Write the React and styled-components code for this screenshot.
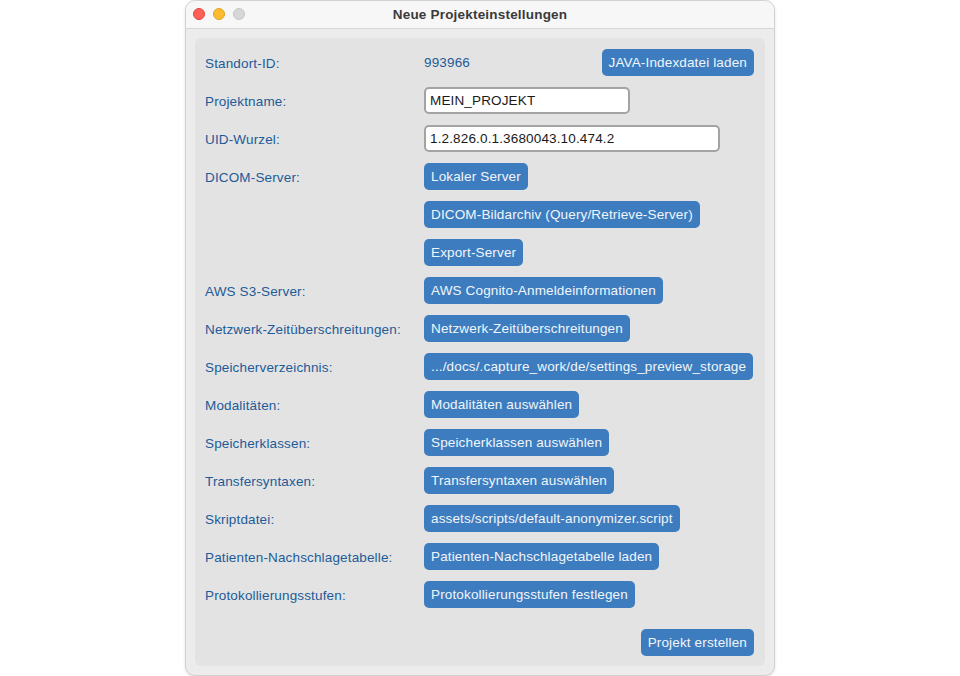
import React from "react";
import styled, { createGlobalStyle } from "styled-components";

const GlobalStyle = createGlobalStyle`
    html, body {
        margin: 0;
        padding: 0;
        background: #ffffff;
    }
    body {
        font-family: "Liberation Sans", Arial, sans-serif;
        -webkit-font-smoothing: antialiased;
    }
`;

const rows = [
    { label: "AWS S3-Server:", buttons: ["AWS Cognito-Anmeldeinformationen"] },
    { label: "Netzwerk-Zeitüberschreitungen:", buttons: ["Netzwerk-Zeitüberschreitungen"] },
    { label: "Speicherverzeichnis:", buttons: [".../docs/.capture_work/de/settings_preview_storage"] },
    { label: "Modalitäten:", buttons: ["Modalitäten auswählen"] },
    { label: "Speicherklassen:", buttons: ["Speicherklassen auswählen"] },
    { label: "Transfersyntaxen:", buttons: ["Transfersyntaxen auswählen"] },
    { label: "Skriptdatei:", buttons: ["assets/scripts/default-anonymizer.script"] },
    { label: "Patienten-Nachschlagetabelle:", buttons: ["Patienten-Nachschlagetabelle laden"] },
    { label: "Protokollierungsstufen:", buttons: ["Protokollierungsstufen festlegen"] },
];

function App() {
    return (
        <>
            <GlobalStyle />
            <Stage>
                <Window>
                    <TitleBar>
                        <Lights>
                            <Light $color="#fe5f57" $edge="#e0443e" />
                            <Light $color="#febc2e" $edge="#dea123" />
                            <Light $color="#d7d7d7" $edge="#c4c4c4" />
                        </Lights>
                        <Title>Neue Projekteinstellungen</Title>
                    </TitleBar>

                    <Body>
                        <Panel>
                            <Form>
                                <Label>Standort-ID:</Label>
                                <Value $spread>
                                    <Plain>993966</Plain>
                                    <Button>JAVA-Indexdatei laden</Button>
                                </Value>

                                <Label>Projektname:</Label>
                                <Value>
                                    <Field $width={206} defaultValue="MEIN_PROJEKT" />
                                </Value>

                                <Label>UID-Wurzel:</Label>
                                <Value>
                                    <Field $width={296} defaultValue="1.2.826.0.1.3680043.10.474.2" />
                                </Value>

                                <Label>DICOM-Server:</Label>
                                <Stack>
                                    <Value><Button>Lokaler Server</Button></Value>
                                    <Value><Button>DICOM-Bildarchiv (Query/Retrieve-Server)</Button></Value>
                                    <Value><Button>Export-Server</Button></Value>
                                </Stack>

                                {rows.map((row) => (
                                    <React.Fragment key={row.label}>
                                        <Label>{row.label}</Label>
                                        <Value>
                                            {row.buttons.map((b) => (
                                                <Button key={b}>{b}</Button>
                                            ))}
                                        </Value>
                                    </React.Fragment>
                                ))}
                            </Form>

                            <Footer>
                                <Button>Projekt erstellen</Button>
                            </Footer>
                        </Panel>
                    </Body>
                </Window>
            </Stage>
        </>
    );
}

export default App;

const Stage = styled.div`
    width: 960px;
    height: 676px;
    display: flex;
    justify-content: center;
    align-items: flex-start;
`;

const Window = styled.div`
    width: 590px;
    height: 676px;
    box-sizing: border-box;
    display: flex;
    flex-direction: column;
    background: #ececec;
    border: 1px solid #d2d2d2;
    border-radius: 10px;
    overflow: hidden;
    box-shadow: 0 1px 3px rgba(0, 0, 0, 0.12);
`;

const TitleBar = styled.div`
    position: relative;
    height: 28px;
    flex-shrink: 0;
    display: flex;
    align-items: center;
    justify-content: center;
    background: #f7f7f7;
    border-bottom: 1px solid #d6d6d6;
    box-sizing: border-box;
`;

const Lights = styled.div`
    position: absolute;
    left: 7px;
    top: 7px;
    display: flex;
    gap: 8px;
`;

const Light = styled.span`
    width: 12px;
    height: 12px;
    border-radius: 50%;
    box-sizing: border-box;
    background: ${(p) => p.$color};
    border: 0.5px solid ${(p) => p.$edge};
`;

const Title = styled.div`
    font-size: 13.5px;
    font-weight: 700;
    letter-spacing: 0.2px;
    color: #3a3a3a;
`;

const Body = styled.div`
    flex: 1;
    padding: 9px;
    display: flex;
`;

const Panel = styled.div`
    flex: 1;
    display: flex;
    flex-direction: column;
    background: #e3e3e3;
    border-radius: 6px;
    padding: 10px 11px 10px 10px;
`;

const Form = styled.div`
    display: grid;
    grid-template-columns: 219px 1fr;
    row-gap: 10px;
`;

const Label = styled.div`
    height: 28px;
    display: flex;
    align-items: center;
    align-self: start;
    padding-top: 2px;
    box-sizing: border-box;
    font-size: 13.5px;
    letter-spacing: 0.15px;
    color: #1e5b98;
`;

const Value = styled.div`
    height: 28px;
    display: flex;
    align-items: center;
    justify-content: ${(p) => (p.$spread ? "space-between" : "flex-start")};
`;

const Stack = styled.div`
    display: flex;
    flex-direction: column;
    gap: 10px;
`;

const Plain = styled.span`
    font-size: 13.5px;
    letter-spacing: 0.15px;
    color: #1e5b98;
`;

const Button = styled.button`
    height: 27px;
    padding: 0 7px;
    border: none;
    border-radius: 5px;
    background: #3d7dbf;
    color: #f1f5fa;
    font-family: "Liberation Sans", Arial, sans-serif;
    font-size: 13.5px;
    letter-spacing: 0.15px;
    white-space: nowrap;
    cursor: pointer;
`;

const Field = styled.input`
    width: ${(p) => p.$width}px;
    height: 27px;
    box-sizing: border-box;
    padding: 0 4px;
    border: 2px solid #a3a3a3;
    border-radius: 5px;
    background: #ffffff;
    color: #1a1a1a;
    font-family: "Liberation Sans", Arial, sans-serif;
    font-size: 13.5px;
    letter-spacing: 0.15px;
    outline: none;
`;

const Footer = styled.div`
    margin-top: auto;
    display: flex;
    justify-content: flex-end;
`;
